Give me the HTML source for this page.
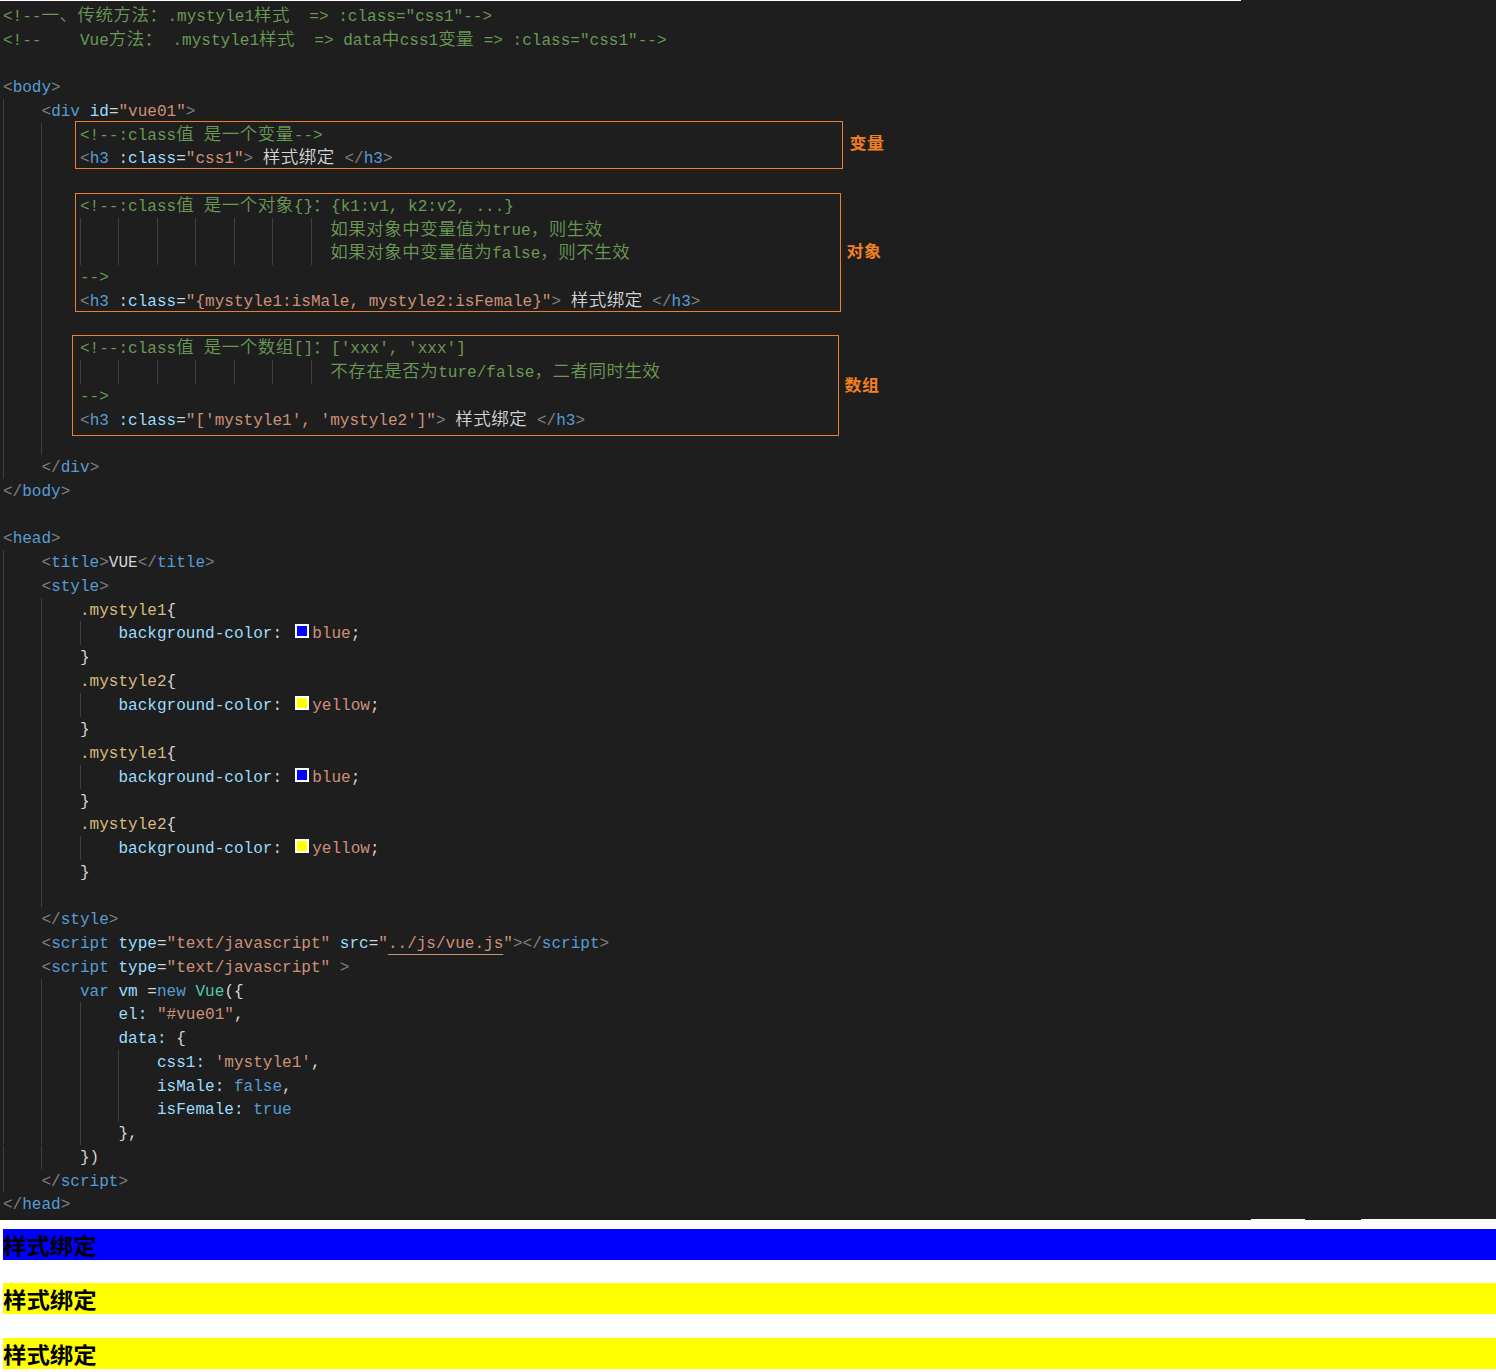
<!DOCTYPE html>
<html lang="zh-CN">
<head>
<meta charset="utf-8">
<title>VUE</title>
<style>
html,body{margin:0;padding:0;}
body{width:1496px;height:1372px;overflow:hidden;position:relative;background:#fff;}
#ed{position:absolute;left:0;top:0;width:1496px;height:1219px;background:#1e1e1e;}
#topw{position:absolute;left:0;top:0;width:1241px;height:1px;background:#fff;}
.nb{position:absolute;height:1px;background:#1e1e1e;top:1219px;}
.l{position:absolute;height:24px;line-height:24px;white-space:pre;font-family:"Liberation Mono","Noto Sans CJK SC",monospace;font-size:16.04px;color:#d4d4d4;letter-spacing:0;}
.z{font-family:"Liberation Mono","Noto Sans CJK SC","WenQuanYi Zen Hei",monospace;font-size:17.5px;line-height:1px;letter-spacing:0.5px;font-weight:350;}
.c{color:#6a9955}.g{color:#808080}.t{color:#569cd6}.a{color:#9cdcfe}.s,.su{color:#ce9178}.w{color:#d4d4d4}
.y{color:#d7ba7d}.k{color:#569cd6}.n{color:#4ec9b0}
.su{text-decoration:underline;text-underline-offset:5.5px;text-decoration-thickness:1px;}
.sw{display:inline-block;width:20.5px;height:1px;}
.sq{position:absolute;left:295px;box-sizing:border-box;width:14px;height:14px;border:2px solid #fff;}
.gd{position:absolute;width:1px;background:#404040;}
.bx{position:absolute;box-sizing:border-box;border:1.4px solid #ed7d31;}
.lb{position:absolute;font-family:"Liberation Sans","Noto Sans CJK SC",sans-serif;font-weight:bold;font-size:17px;letter-spacing:0.5px;line-height:20px;color:#f38021;white-space:nowrap;transform:scaleY(0.95);transform-origin:0 100%;}
.h{position:absolute;left:3px;width:1493px;height:31px;line-height:31px;font-family:"Liberation Sans","Noto Sans CJK SC",sans-serif;font-weight:bold;font-size:23.4px;color:#000;white-space:nowrap;}
.h span{display:inline-block;position:relative;top:1.5px;transform:scaleY(0.94);transform-origin:0 50%;}
</style>
</head>
<body>
<div id="ed"></div>
<div id="topw"></div>
<div class="nb" style="left:0;width:1251px"></div>
<div class="nb" style="left:1305px;width:56px"></div>

<div class="gd" style="left:3.00px;top:99.00px;height:380.00px"></div>
<div class="gd" style="left:41.00px;top:123.00px;height:332.00px"></div>
<div class="gd" style="left:3.00px;top:550.00px;height:642.00px"></div>
<div class="gd" style="left:41.00px;top:598.00px;height:309.00px"></div>
<div class="gd" style="left:80.00px;top:621.00px;height:24.00px"></div>
<div class="gd" style="left:80.00px;top:693.00px;height:24.00px"></div>
<div class="gd" style="left:80.00px;top:765.00px;height:24.00px"></div>
<div class="gd" style="left:80.00px;top:836.00px;height:24.00px"></div>
<div class="gd" style="left:41.00px;top:979.00px;height:190.00px"></div>
<div class="gd" style="left:80.00px;top:1002.00px;height:143.00px"></div>
<div class="gd" style="left:118.00px;top:1050.00px;height:71.00px"></div>
<div class="gd" style="left:80.00px;top:218.00px;height:47.00px"></div>
<div class="gd" style="left:80.00px;top:360.00px;height:24.00px"></div>
<div class="gd" style="left:118.00px;top:218.00px;height:47.00px"></div>
<div class="gd" style="left:118.00px;top:360.00px;height:24.00px"></div>
<div class="gd" style="left:157.00px;top:218.00px;height:47.00px"></div>
<div class="gd" style="left:157.00px;top:360.00px;height:24.00px"></div>
<div class="gd" style="left:195.00px;top:218.00px;height:47.00px"></div>
<div class="gd" style="left:195.00px;top:360.00px;height:24.00px"></div>
<div class="gd" style="left:234.00px;top:218.00px;height:47.00px"></div>
<div class="gd" style="left:234.00px;top:360.00px;height:24.00px"></div>
<div class="gd" style="left:272.00px;top:218.00px;height:47.00px"></div>
<div class="gd" style="left:272.00px;top:360.00px;height:24.00px"></div>
<div class="gd" style="left:311.00px;top:218.00px;height:47.00px"></div>
<div class="gd" style="left:311.00px;top:360.00px;height:24.00px"></div>
<div class="l" style="top:5.00px;left:3.000px"><span class="c">&lt;!--<span class="z">一、传统方法：</span>.mystyle1<span class="z">样式</span>  =&gt; :class="css1"--&gt;</span></div>
<div class="l" style="top:29.00px;left:3.000px"><span class="c">&lt;!--    Vue<span class="z">方法：</span> .mystyle1<span class="z">样式</span>  =&gt; data<span class="z">中</span>css1<span class="z">变量</span> =&gt; :class="css1"--&gt;</span></div>
<div class="l" style="top:76.00px;left:3.000px"><span class="g">&lt;</span><span class="t">body</span><span class="g">&gt;</span></div>
<div class="l" style="top:100.00px;left:41.500px"><span class="g">&lt;</span><span class="t">div</span><span class="w"> </span><span class="a">id</span><span class="w">=</span><span class="s">"vue01"</span><span class="g">&gt;</span></div>
<div class="l" style="top:124.00px;left:80.000px"><span class="c">&lt;!--:class<span class="z">值</span> <span class="z">是一个变量</span>--&gt;</span></div>
<div class="l" style="top:147.00px;left:80.000px"><span class="g">&lt;</span><span class="t">h3</span><span class="w"> </span><span class="a">:class</span><span class="w">=</span><span class="s">"css1"</span><span class="g">&gt;</span><span class="w"> <span class="z">样式绑定</span> </span><span class="g">&lt;/</span><span class="t">h3</span><span class="g">&gt;</span></div>
<div class="l" style="top:195.00px;left:80.000px"><span class="c">&lt;!--:class<span class="z">值</span> <span class="z">是一个对象</span>{}<span class="z">：</span>{k1:v1, k2:v2, ...}</span></div>
<div class="l" style="top:219.00px;left:330.250px"><span class="c"><span class="z">如果对象中变量值为</span>true<span class="z">，则生效</span></span></div>
<div class="l" style="top:242.00px;left:330.250px"><span class="c"><span class="z">如果对象中变量值为</span>false<span class="z">，则不生效</span></span></div>
<div class="l" style="top:266.00px;left:80.000px"><span class="c">--&gt;</span></div>
<div class="l" style="top:290.00px;left:80.000px"><span class="g">&lt;</span><span class="t">h3</span><span class="w"> </span><span class="a">:class</span><span class="w">=</span><span class="s">"{mystyle1:isMale, mystyle2:isFemale}"</span><span class="g">&gt;</span><span class="w"> <span class="z">样式绑定</span> </span><span class="g">&lt;/</span><span class="t">h3</span><span class="g">&gt;</span></div>
<div class="l" style="top:337.00px;left:80.000px"><span class="c">&lt;!--:class<span class="z">值</span> <span class="z">是一个数组</span>[]<span class="z">：</span>['xxx', 'xxx']</span></div>
<div class="l" style="top:361.00px;left:330.250px"><span class="c"><span class="z">不存在是否为</span>ture/false<span class="z">，二者同时生效</span></span></div>
<div class="l" style="top:385.00px;left:80.000px"><span class="c">--&gt;</span></div>
<div class="l" style="top:409.00px;left:80.000px"><span class="g">&lt;</span><span class="t">h3</span><span class="w"> </span><span class="a">:class</span><span class="w">=</span><span class="s">"['mystyle1', 'mystyle2']"</span><span class="g">&gt;</span><span class="w"> <span class="z">样式绑定</span> </span><span class="g">&lt;/</span><span class="t">h3</span><span class="g">&gt;</span></div>
<div class="l" style="top:456.00px;left:41.500px"><span class="g">&lt;/</span><span class="t">div</span><span class="g">&gt;</span></div>
<div class="l" style="top:480.00px;left:3.000px"><span class="g">&lt;/</span><span class="t">body</span><span class="g">&gt;</span></div>
<div class="l" style="top:527.00px;left:3.000px"><span class="g">&lt;</span><span class="t">head</span><span class="g">&gt;</span></div>
<div class="l" style="top:551.00px;left:41.500px"><span class="g">&lt;</span><span class="t">title</span><span class="g">&gt;</span><span class="w">VUE</span><span class="g">&lt;/</span><span class="t">title</span><span class="g">&gt;</span></div>
<div class="l" style="top:575.00px;left:41.500px"><span class="g">&lt;</span><span class="t">style</span><span class="g">&gt;</span></div>
<div class="l" style="top:599.00px;left:80.000px"><span class="y">.mystyle1</span><span class="w">{</span></div>
<div class="l" style="top:622.00px;left:118.500px"><span class="a">background-color</span><span class="w">: </span><span class="sw"></span><span class="s">blue</span><span class="w">;</span></div>
<div class="l" style="top:646.00px;left:80.000px"><span class="w">}</span></div>
<div class="l" style="top:670.00px;left:80.000px"><span class="y">.mystyle2</span><span class="w">{</span></div>
<div class="l" style="top:694.00px;left:118.500px"><span class="a">background-color</span><span class="w">: </span><span class="sw"></span><span class="s">yellow</span><span class="w">;</span></div>
<div class="l" style="top:718.00px;left:80.000px"><span class="w">}</span></div>
<div class="l" style="top:742.00px;left:80.000px"><span class="y">.mystyle1</span><span class="w">{</span></div>
<div class="l" style="top:766.00px;left:118.500px"><span class="a">background-color</span><span class="w">: </span><span class="sw"></span><span class="s">blue</span><span class="w">;</span></div>
<div class="l" style="top:790.00px;left:80.000px"><span class="w">}</span></div>
<div class="l" style="top:813.00px;left:80.000px"><span class="y">.mystyle2</span><span class="w">{</span></div>
<div class="l" style="top:837.00px;left:118.500px"><span class="a">background-color</span><span class="w">: </span><span class="sw"></span><span class="s">yellow</span><span class="w">;</span></div>
<div class="l" style="top:861.00px;left:80.000px"><span class="w">}</span></div>
<div class="l" style="top:908.00px;left:41.500px"><span class="g">&lt;/</span><span class="t">style</span><span class="g">&gt;</span></div>
<div class="l" style="top:932.00px;left:41.500px"><span class="g">&lt;</span><span class="t">script</span><span class="w"> </span><span class="a">type</span><span class="w">=</span><span class="s">"text/javascript"</span><span class="w"> </span><span class="a">src</span><span class="w">=</span><span class="s">"</span><span class="su">../js/vue.js</span><span class="s">"</span><span class="g">&gt;&lt;/</span><span class="t">script</span><span class="g">&gt;</span></div>
<div class="l" style="top:956.00px;left:41.500px"><span class="g">&lt;</span><span class="t">script</span><span class="w"> </span><span class="a">type</span><span class="w">=</span><span class="s">"text/javascript"</span><span class="w"> </span><span class="g">&gt;</span></div>
<div class="l" style="top:980.00px;left:80.000px"><span class="k">var</span><span class="w"> </span><span class="a">vm</span><span class="w"> =</span><span class="k">new</span><span class="w"> </span><span class="n">Vue</span><span class="w">({</span></div>
<div class="l" style="top:1003.00px;left:118.500px"><span class="a">el</span><span class="a">:</span><span class="w"> </span><span class="s">"#vue01"</span><span class="w">,</span></div>
<div class="l" style="top:1027.00px;left:118.500px"><span class="a">data</span><span class="a">:</span><span class="w"> {</span></div>
<div class="l" style="top:1051.00px;left:157.000px"><span class="a">css1</span><span class="a">:</span><span class="w"> </span><span class="s">'mystyle1'</span><span class="w">,</span></div>
<div class="l" style="top:1075.00px;left:157.000px"><span class="a">isMale</span><span class="a">:</span><span class="w"> </span><span class="k">false</span><span class="w">,</span></div>
<div class="l" style="top:1098.00px;left:157.000px"><span class="a">isFemale</span><span class="a">:</span><span class="w"> </span><span class="k">true</span></div>
<div class="l" style="top:1122.00px;left:118.500px"><span class="w">},</span></div>
<div class="l" style="top:1146.00px;left:80.000px"><span class="w">})</span></div>
<div class="l" style="top:1170.00px;left:41.500px"><span class="g">&lt;/</span><span class="t">script</span><span class="g">&gt;</span></div>
<div class="l" style="top:1193.00px;left:3.000px"><span class="g">&lt;/</span><span class="t">head</span><span class="g">&gt;</span></div>
<div style="position:absolute;left:0;top:1144px;width:60px;height:1px;background:#1e1e1e"></div>
<div class="sq" style="top:624px;background:#0000ff"></div>
<div class="sq" style="top:696px;background:#ffff00"></div>
<div class="sq" style="top:768px;background:#0000ff"></div>
<div class="sq" style="top:839px;background:#ffff00"></div>
<div class="bx" style="left:75px;top:121px;width:768px;height:48px"></div>
<div class="bx" style="left:75px;top:193px;width:766px;height:119px"></div>
<div class="bx" style="left:72px;top:335px;width:767px;height:101px"></div>
<div class="lb" style="left:849.5px;top:133.5px">变量</div>
<div class="lb" style="left:846.5px;top:241.5px">对象</div>
<div class="lb" style="left:844.5px;top:375.5px">数组</div>
<div class="h" style="top:1229px;background:#0000ff"><span>样式绑定</span></div>
<div class="h" style="top:1283px;background:#ffff00"><span>样式绑定</span></div>
<div class="h" style="top:1338px;background:#ffff00"><span>样式绑定</span></div>
</body>
</html>
